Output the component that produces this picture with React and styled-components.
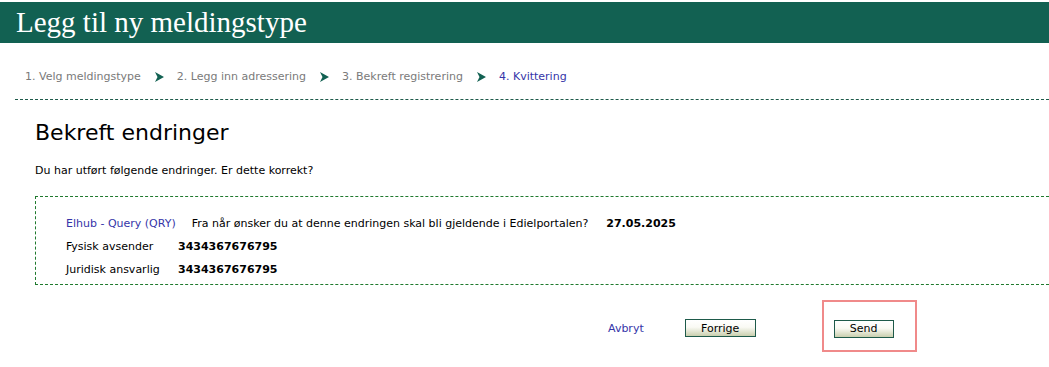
import styled, { createGlobalStyle } from 'styled-components';

const GlobalStyle = createGlobalStyle`
  body {
    margin: 0;
    background: #fff;
    font-family: "DejaVu Sans", Verdana, sans-serif;
  }
`;

const Page = styled.div`
  padding-top: 2px;
  width: 1049px;
  overflow: hidden;
`;

const Header = styled.h1`
  margin: 0;
  height: 41px;
  background: #126152;
  color: #fff;
  font-family: "Liberation Serif", Georgia, serif;
  font-weight: normal;
  font-size: 29px;
  line-height: 41px;
  padding-left: 16px;
`;

const Steps = styled.nav`
  display: flex;
  align-items: center;
  margin: 0 0 0 15px;
  padding: 26px 0 15px 10px;
  border-bottom: 1px dashed #1e5a4a;
  font-size: 11px;
  line-height: 15px;
`;

const Step = styled.span`
  color: ${p => (p.$active ? '#3535a8' : '#7a7a7a')};
`;

const Arrow = styled.svg`
  width: 9px;
  height: 10px;
  margin: 0 13px 0 14px;
  fill: #126152;
`;

const Main = styled.main`
  padding: 20px 0 0 35px;
`;

const Title = styled.h2`
  margin: 0;
  font-size: 22px;
  font-weight: normal;
  color: #000;
  line-height: 26px;
`;

const Intro = styled.p`
  margin: 18px 0 19px;
  font-size: 11px;
  color: #000;
`;

const ChangeBox = styled.section`
  border: 1px dashed #1f7a2e;
  border-right: none;
  padding: 20px 0 7px 30px;
  font-size: 11px;
  color: #000;
  display: flex;
  flex-direction: column;
  gap: 9px;
`;

const FirstRow = styled.div`
  display: flex;
  gap: 14px;
  line-height: 14px;
`;

const InfoRow = styled.div`
  display: grid;
  grid-template-columns: 112px auto;
  line-height: 14px;
`;

const TypeName = styled.span`
  color: #3535a8;
  margin-right: 2px;
`;

const Value = styled.b`
  font-weight: bold;
  margin-left: ${p => p.$offset || 0}px;
`;

const Actions = styled.div`
  display: flex;
  align-items: flex-start;
  margin-top: 15px;
  padding-left: 573px;
`;

const CancelLink = styled.a`
  color: #3535a8;
  font-size: 11px;
  line-height: 18px;
  text-decoration: none;
  margin: 20px 41px 0 0;
`;

const Button = styled.button`
  font-family: "DejaVu Sans", Verdana, sans-serif;
  font-size: 11px;
  width: ${p => p.$width}px;
  height: 18px;
  padding: 0;
  border: 1px solid #1e5a4a;
  background: linear-gradient(#ffffff 0%, #fafaf4 45%, #c9cfae 100%);
  color: #000;
`;

const PrevButton = styled(Button)`
  margin-top: 19px;
`;

const Highlight = styled.div`
  margin-left: 66px;
  width: 95px;
  height: 52px;
  border: 2px solid #f08a8a;
  padding: 15px 0 0 10px;
  box-sizing: border-box;
`;

const ArrowIcon = () => (
  <Arrow viewBox="0 0 9 10">
    <polygon points="0,0 9,5 0,10 2.5,5" />
  </Arrow>
);

const steps = [
  '1. Velg meldingstype',
  '2. Legg inn adressering',
  '3. Bekreft registrering',
  '4. Kvittering',
];

export default function App() {
  return (
    <Page>
      <GlobalStyle />
      <Header>Legg til ny meldingstype</Header>
      <Steps>
        {steps.map((s, i) => (
          <span key={s} style={{ display: 'contents' }}>
            {i > 0 && <ArrowIcon />}
            <Step $active={i === steps.length - 1}>{s}</Step>
          </span>
        ))}
      </Steps>
      <Main>
        <Title>Bekreft endringer</Title>
        <Intro>Du har utført følgende endringer. Er dette korrekt?</Intro>
        <ChangeBox>
          <FirstRow>
            <TypeName>Elhub - Query (QRY)</TypeName>
            <span>Fra når ønsker du at denne endringen skal bli gjeldende i Edielportalen?</span>
            <Value $offset={4}>27.05.2025</Value>
          </FirstRow>
          <InfoRow>
            <span>Fysisk avsender</span>
            <Value>3434367676795</Value>
          </InfoRow>
          <InfoRow>
            <span>Juridisk ansvarlig</span>
            <Value>3434367676795</Value>
          </InfoRow>
        </ChangeBox>
        <Actions>
          <CancelLink href="#">Avbryt</CancelLink>
          <PrevButton $width={71}>Forrige</PrevButton>
          <Highlight>
            <Button $width={60}>Send</Button>
          </Highlight>
        </Actions>
      </Main>
    </Page>
  );
}
